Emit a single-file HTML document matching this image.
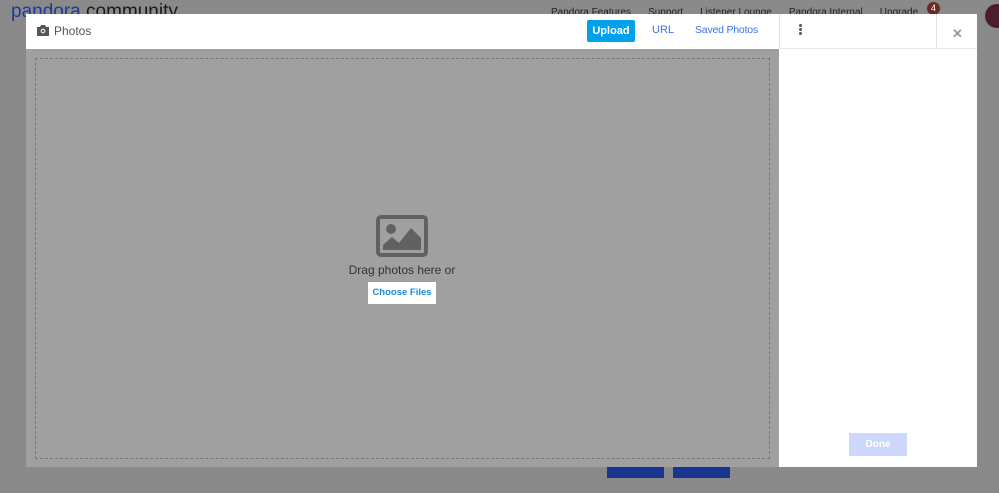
<!DOCTYPE html>
<html><head><style>
body{margin:0;width:999px;height:493px;background:#8a8a8a;font-family:"Liberation Sans",sans-serif;position:relative;overflow:hidden}
.a{position:absolute}
</style></head><body>
<div class="a" style="left:11px;top:0;font-size:19px;color:#1a1a1a;line-height:20px;top:2px"><span style="color:#1c3a9e">pandora</span> community</div>
<div class="a" style="top:7px;left:551px;font-size:10px;color:#222;white-space:nowrap"><span>Pandora Features</span><span style="margin-left:17px">Support</span><span style="margin-left:17px">Listener Lounge</span><span style="margin-left:17px">Pandora Internal</span><span style="margin-left:17px">Upgrade</span></div>
<div class="a" style="left:927px;top:2px;width:13px;height:13px;border-radius:50%;background:#6b2b24;color:#fff;font-size:9px;text-align:center;line-height:13px">4</div>
<div class="a" style="left:985px;top:4px;width:24px;height:24px;border-radius:50%;background:#4a1e2a"></div>
<div class="a" style="left:607px;top:462px;width:57px;height:16px;background:#1a3590"></div>
<div class="a" style="left:673px;top:462px;width:57px;height:16px;background:#1a3590"></div>
<div class="a" style="left:26px;top:14px;width:951px;height:453px;background:#fff"></div>
<div class="a" style="left:26px;top:49px;width:753px;height:418px;background:#a0a0a0"></div>
<div class="a" style="left:35px;top:58px;width:733px;height:399px;border:1px dashed #777"></div>
<div class="a" style="left:779px;top:14px;width:1px;height:35px;background:#e0e0e0"></div>
<div class="a" style="left:936px;top:14px;width:1px;height:35px;background:#e0e0e0"></div>
<div class="a" style="left:779px;top:48px;width:198px;height:1px;background:#e6e6e6"></div>
<svg class="a" style="left:37px;top:25px" width="12" height="11" viewBox="0 0 12 11"><path d="M0 2h3l1-2h4l1 2h3v9H0z" fill="#555"/><circle cx="6" cy="6" r="2.3" fill="#fff"/><circle cx="6" cy="6" r="1.3" fill="#555"/></svg>
<div class="a" style="left:54px;top:24px;font-size:12px;color:#555">Photos</div>
<div class="a" style="left:587px;top:20px;width:48px;height:22px;background:#00a0ea;border-radius:2px;color:#fff;font-size:11px;font-weight:bold;text-align:center;line-height:22px">Upload</div>
<div class="a" style="left:652px;top:24px;font-size:11px;color:#3b73f0">URL</div>
<div class="a" style="left:695px;top:24px;font-size:10.5px;color:#3b73f0;letter-spacing:-0.2px">Saved Photos</div>
<div class="a" style="left:799px;top:24px;width:3px;height:3px;border-radius:50%;background:#555;box-shadow:0 4px 0 #555,0 8px 0 #555"></div>
<div class="a" style="left:952px;top:26px;font-size:13px;color:#999;font-weight:bold">✕</div>
<svg class="a" style="left:376px;top:215px" width="52" height="42" viewBox="0 0 52 42"><rect x="2" y="2" width="48" height="38" rx="3" fill="none" stroke="#616161" stroke-width="4"/><circle cx="15" cy="14" r="5" fill="#616161"/><path d="M7 35 L7 30 L16 22 L23 28 L35 13 L45 23 L45 35Z" fill="#616161"/></svg>
<div class="a" style="left:330px;top:263px;width:144px;text-align:center;font-size:12px;color:#333">Drag photos here or</div>
<div class="a" style="left:368px;top:282px;width:68px;height:22px;background:#fff;color:#1a8ae6;font-size:9.5px;font-weight:bold;text-align:center;line-height:22px">Choose Files</div>
<div class="a" style="left:849px;top:433px;width:58px;height:23px;background:#cdd7fb;color:#fff;font-size:10px;font-weight:bold;text-align:center;line-height:23px">Done</div>
</body></html>
